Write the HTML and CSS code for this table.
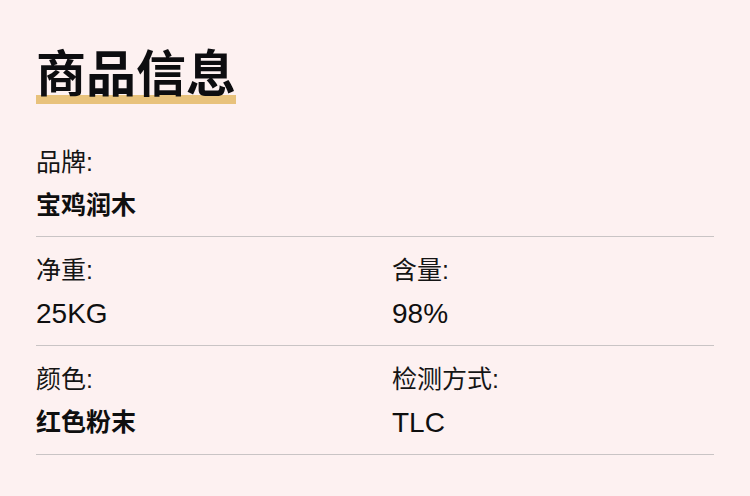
FILE: index.html
```html
<!DOCTYPE html>
<html lang="zh">
<head>
<meta charset="utf-8">
<title>商品信息</title>
<link rel="stylesheet" href="styles.css">
</head>
<body>
<main class="sheet">
  <h1 class="title"><span class="title-text">商品信息</span></h1>
  <section class="row">
    <div class="field">
      <div class="label">品牌:</div>
      <div class="value">宝鸡润木</div>
    </div>
  </section>
  <section class="row">
    <div class="field">
      <div class="label">净重:</div>
      <div class="value latin">25KG</div>
    </div>
    <div class="field">
      <div class="label">含量:</div>
      <div class="value latin">98%</div>
    </div>
  </section>
  <section class="row">
    <div class="field">
      <div class="label">颜色:</div>
      <div class="value">红色粉末</div>
    </div>
    <div class="field">
      <div class="label">检测方式:</div>
      <div class="value latin">TLC</div>
    </div>
  </section>
</main>
</body>
</html>
```

FILE: styles.css
```css
html, body {
  margin: 0;
  padding: 0;
  background: #fdf1f1;
}
body {
  font-family: "Liberation Sans", "Noto Sans CJK SC", sans-serif;
  color: #111;
}
.sheet {
  padding: 36px 36px 0 36px;
}
.title {
  margin: 0 0 25px 0;
  font-size: 50px;
  line-height: 68px;
  font-weight: 700;
  font-family: "Noto Sans CJK SC", sans-serif;
  color: #0d0d10;
}
.title-text {
  text-decoration: underline;
  text-decoration-color: #e8c27c;
  text-decoration-thickness: 9px;
  text-underline-offset: 3px;
  text-decoration-skip-ink: auto;
}
.row {
  display: grid;
  grid-template-columns: 1fr 1fr;
  column-gap: 34px;
  padding: 15px 0 11px 0;
  border-bottom: 1px solid #c9c4c5;
}
.label {
  font-size: 25px;
  line-height: 36px;
  font-weight: 400;
  color: #151515;
}
.value {
  margin-top: 5px;
  font-size: 25px;
  line-height: 40px;
  font-weight: 700;
  color: #0f0f0f;
}
.value.latin {
  margin-top: 6px;
  font-size: 28px;
  font-weight: 400;
}
```
